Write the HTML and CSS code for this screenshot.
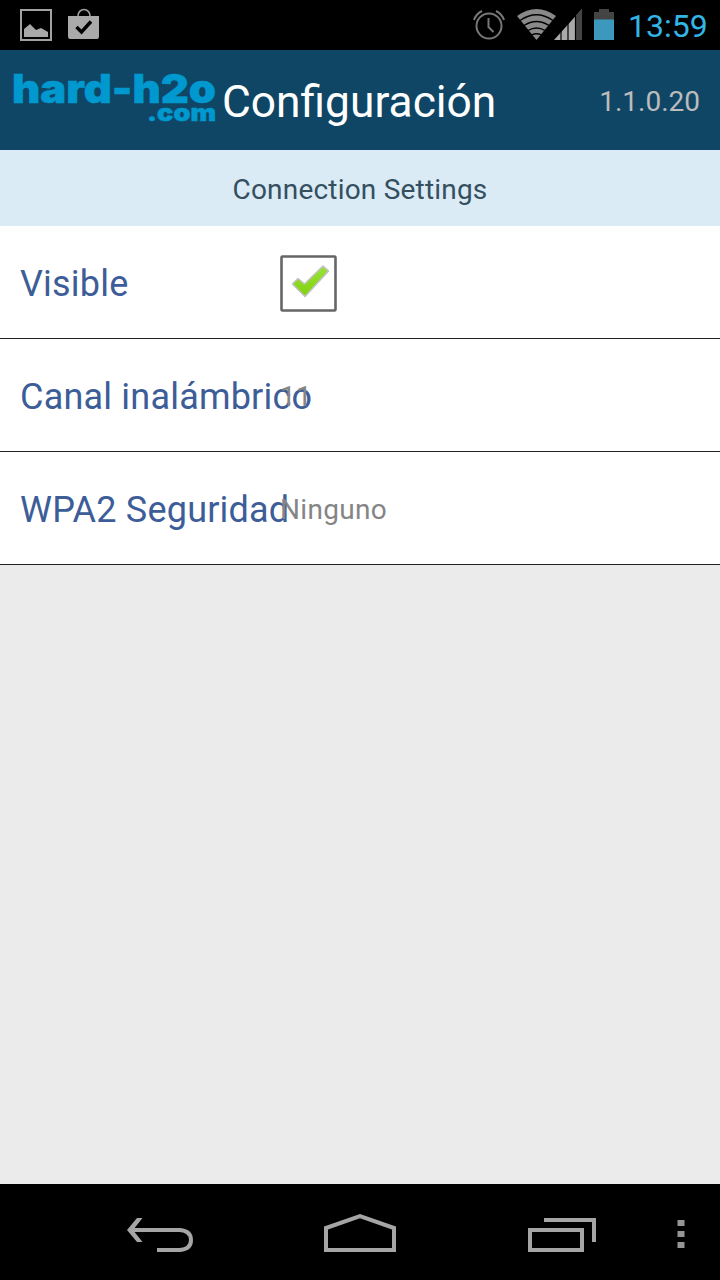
FILE: index.html
```html
<!doctype html>
<html lang="es">
	<head>
		<meta charset="utf-8">
		<meta name="viewport" content="width=device-width">

		<title>Configuración</title>

		<link rel="stylesheet" href="styles.css">
	</head>

	<body>

		<div class="status-bar">
			<svg class="icon-image" width="32" height="32" viewBox="0 0 32 32">
				<rect x="1" y="1" width="30" height="30" fill="none" stroke="#a2a2a2" stroke-width="2"/>
				<path d="M4 28V20l6-5 6 6 5-2 7 4v5z" fill="#a8a8a8"/>
			</svg>
			<svg class="icon-store" width="32" height="32" viewBox="0 0 32 32">
				<path d="M10 8a6 6.500 0 0 1 12 0" fill="none" stroke="#a0a0a0" stroke-width="1.600"/>
				<path d="M0 8h31v20q0 3-2 3H2q-2 0-2-3z" fill="#aaa"/>
				<path d="M8.500 19l5 5L23 13.500" fill="none" stroke="#000" stroke-width="3.400"/>
			</svg>
			<div class="status-right">
				<svg class="icon-alarm" width="32" height="32" viewBox="0 0 32 32">
					<g fill="none" stroke="#777" stroke-width="2">
						<circle cx="16" cy="17" r="12.500"/>
						<path d="M15.500 9v9l5 5M1 11q2-6 8-9M31 11q-2-6-8-9"/>
					</g>
				</svg>
				<svg class="icon-wifi" width="40" height="32" viewBox="0 0 40 32">
					<path d="M0 7Q19.500-7 39 7L19.500 31z" fill="#898989"/>
					<path d="M3 11.500q16.500-11.500 33 0M7 16.500q12.500-8 25 0M11 21.500q8.500-5 17 0M14.500 26q5-2.500 10 0" fill="none" stroke="#000" stroke-width="1.300"/>
				</svg>
				<svg class="icon-signal" width="28" height="32" viewBox="0 0 28 32">
					<path d="M0 31L28 0V31z" fill="#aaa"/>
					<path d="M22 6.500L28 0V31H22z" fill="#444"/>
					<path d="M7 20v12M14 12v20M21.500 4v28" stroke="#000" stroke-width="1.200"/>
				</svg>
				<svg class="icon-battery" width="20" height="32" viewBox="0 0 20 32">
					<path d="M0 3h5V0h10v3h5v8H0z" fill="#444"/>
					<rect y="10.500" width="20" height="20.500" fill="#3d98bd"/>
				</svg>
				<span class="clock">13:59</span>
			</div>
		</div>

		<header>
			<svg class="logo" width="204" height="56" viewBox="0 0 204 56">
				<text x="0" y="34" font-size="40" textLength="204" lengthAdjust="spacingAndGlyphs">hard-h2o</text>
				<text x="135" y="52" font-size="23" textLength="69" lengthAdjust="spacingAndGlyphs">.com</text>
			</svg>
			<h1>Configuración</h1>
			<span class="version">1.1.0.20</span>
		</header>

		<main>
			<h2>Connection Settings</h2>
			<div class="row">
				<label>Visible</label>
				<svg class="checkbox" width="57" height="57" viewBox="0 0 57 57">
					<defs>
						<linearGradient id="green" x1="0" y1="0" x2="0" y2="1">
							<stop offset="0" stop-color="#9be23a"/>
							<stop offset="1" stop-color="#80d20c"/>
						</linearGradient>
					</defs>
					<rect x="1.500" y="1.500" width="54" height="54" rx="1" fill="#fff" stroke="#666" stroke-width="2.600"/>
					<path d="M12.500 29l5.500-5.500 6.500 5.500L43 11l5.500 5L25 41.500z" fill="url(#green)" stroke="#c2c2c2" stroke-width="1.600" stroke-linejoin="round"/>
				</svg>
			</div>
			<div class="row">
				<label>Canal inalámbrico</label>
				<span class="value">11</span>
			</div>
			<div class="row">
				<label>WPA2 Seguridad</label>
				<span class="value">Ninguno</span>
			</div>
		</main>

		<nav>
			<svg class="icon-back" width="68" height="36" viewBox="0 0 68 36">
				<path d="M4 13H53q11 1 11 10t-11 10H30" fill="none" stroke="#a5a5a5" stroke-width="4"/>
				<path d="M10 1h5.500L6 13l9.500 12H10L0 13z" fill="#a5a5a5"/>
			</svg>
			<svg class="icon-home" width="72" height="39" viewBox="0 0 72 39">
				<path d="M2 37V15L36 3l34 12v22z" fill="none" stroke="#a5a5a5" stroke-width="4"/>
			</svg>
			<svg class="icon-recent" width="68" height="34" viewBox="0 0 68 34">
				<path d="M2 12H54V32H2zM16 2H66V24" fill="none" stroke="#a5a5a5" stroke-width="4"/>
			</svg>
			<svg class="icon-menu" width="8" height="28" viewBox="0 0 8 28">
				<path d="M.5 0h7v6h-7zM.5 11h7v6h-7zM.5 22h7v6h-7z" fill="#959595"/>
			</svg>
		</nav>

	</body>
</html>
```
FILE: styles.css
```css
html, body {
	margin: 0;
	width: 100%;
	height: 100%;
}

body {
	display: flex;
	flex-direction: column;
	font-family: Roboto, "Liberation Sans", sans-serif;
	background-color: #ebebeb;
	overflow: hidden;
}

svg {
	display: block;
	flex: none;
}

.status-bar {
	display: flex;
	align-items: center;
	height: 50px;
	padding: 0 12px 0 20px;
	background-color: #000;
	box-sizing: border-box;
}

.icon-store {
	margin-left: 16px;
	margin-bottom: 2px;
}

.status-right {
	display: flex;
	align-items: center;
	margin-left: auto;
}

.icon-wifi {
	margin-left: 12px;
}

.icon-signal {
	margin-left: -3px;
}

.icon-battery {
	margin-left: 12px;
}

.clock {
	width: 79px;
	margin-left: 14px;
	margin-right: 1px;
	padding-top: 2px;
	font-size: 32px;
	line-height: 50px;
	color: #33b5e5;
	box-sizing: border-box;
}

header {
	display: flex;
	align-items: center;
	height: 100px;
	padding: 0 20px 0 12px;
	background-color: #104665;
	box-sizing: border-box;
}

.logo {
	margin-bottom: 7px;
	overflow: visible;
}

.logo text {
	font-family: Inter, "Liberation Sans", sans-serif;
	font-weight: 900;
	fill: #0099cf;
	stroke: #0099cf;
	stroke-width: 0.5px;
}

h1 {
	margin: 4px 0 0 6px;
	font-size: 44.3px;
	font-weight: 400;
	line-height: 100px;
	color: #fff;
}

.version {
	margin-left: auto;
	padding-top: 2px;
	font-size: 28px;
	color: #bcbcbc;
}

main {
	flex: 1;
}

h2 {
	margin: 0;
	height: 76px;
	line-height: 80px;
	font-size: 28px;
	font-weight: 400;
	letter-spacing: 0.2px;
	text-align: center;
	color: #344f5f;
	background-color: #dbebf5;
}

.row {
	display: flex;
	align-items: center;
	height: 113px;
	padding-left: 20px;
	border-bottom: 1px solid #222;
	background-color: #fff;
	box-sizing: border-box;
}

/* fixed label column, long labels run under the value */
label {
	width: 260px;
	flex: none;
	padding-top: 4px;
	white-space: nowrap;
	font-size: 36px;
	letter-spacing: 0.2px;
	color: #3d5d98;
}

.checkbox {
	margin-top: 2px;
}

.value {
	padding-top: 3px;
	font-size: 28px;
	letter-spacing: 0.3px;
	color: #858585;
}

nav {
	display: flex;
	align-items: center;
	height: 96px;
	padding-left: 127px;
	background-color: #000;
}

.icon-back {
	margin-top: 6px;
}

.icon-home {
	margin-left: 129px;
	margin-top: 1px;
}

.icon-recent {
	margin-left: 132px;
	margin-top: 6px;
}

.icon-menu {
	margin-left: 81px;
	margin-top: 4px;
}
```
